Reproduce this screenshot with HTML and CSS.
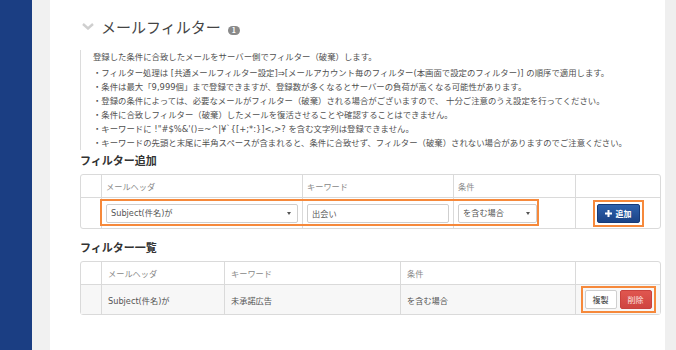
FILE: index.html
```html
<!DOCTYPE html>
<html lang="ja">
<head>
    <meta charset="UTF-8">
    <meta name="viewport" content="width=device-width, initial-scale=1.0">
    <title>メールフィルター</title>
    <link rel="stylesheet" href="styles.css">
</head>
<body>
    <div class="layout">
        <div class="sidebar"></div>
        <div class="main">
            <div class="panel">
                <h1 class="title">
                    <svg class="chevron" width="12" height="7" viewBox="0 0 12 7">
                        <polyline points="1,1 6,5.5 11,1" fill="none" stroke="#cfcfcf" stroke-width="2.4"/>
                    </svg>
                    メールフィルター
                    <span class="badge">1</span>
                </h1>

                <!-- Description -->
                <div class="note">
                    <p>登録した条件に合致したメールをサーバー側でフィルター（破棄）します。</p>
                    <ul>
                        <li>・フィルター処理は [共通メールフィルター設定]⇒[メールアカウント毎のフィルター(本画面で設定のフィルター)] の順序で適用します。</li>
                        <li>・条件は最大「9,999個」まで登録できますが、登録数が多くなるとサーバーの負荷が高くなる可能性があります。</li>
                        <li>・登録の条件によっては、必要なメールがフィルター（破棄）される場合がございますので、 十分ご注意のうえ設定を行ってください。</li>
                        <li>・条件に合致しフィルター（破棄）したメールを復活させることや確認することはできません。</li>
                        <li>・キーワードに !"#$%&amp;'()=~^|¥`{[+;*:}]&lt;,&gt;? を含む文字列は登録できません。</li>
                        <li>・キーワードの先頭と末尾に半角スペースが含まれると、条件に合致せず、フィルター（破棄）されない場合がありますのでご注意ください。</li>
                    </ul>
                </div>

                <!-- Add filter -->
                <h2 class="section-title">フィルター追加</h2>
                <div class="table-wrap">
                    <table class="grid grid-add">
                        <colgroup>
                            <col style="width: 20px">
                            <col style="width: 201px">
                            <col style="width: 151px">
                            <col style="width: 122px">
                            <col>
                        </colgroup>
                        <tr class="head">
                            <td></td>
                            <td>メールヘッダ</td>
                            <td>キーワード</td>
                            <td>条件</td>
                            <td></td>
                        </tr>
                        <tr class="body">
                            <td></td>
                            <td>
                                <div class="select select-wide">Subject(件名)が</div>
                            </td>
                            <td>
                                <input class="field" type="text" value="出会い">
                            </td>
                            <td>
                                <div class="select select-small">を含む場合</div>
                            </td>
                            <td class="actions">
                                <span class="mark">
                                    <button class="btn btn-primary">
                                        <svg width="7" height="7" viewBox="0 0 7 7">
                                            <path d="M2.5 0h2v2.5h2.5v2h-2.5v2.5h-2v-2.5h-2.5v-2h2.5z" fill="#fff"/>
                                        </svg>
                                        追加
                                    </button>
                                </span>
                            </td>
                        </tr>
                    </table>
                    <div class="highlight"></div>
                </div>

                <!-- Filter list -->
                <h2 class="section-title">フィルター一覧</h2>
                <table class="grid grid-list">
                    <colgroup>
                        <col style="width: 20px">
                        <col style="width: 123px">
                        <col style="width: 176px">
                        <col style="width: 175px">
                        <col>
                    </colgroup>
                    <tr class="head">
                        <td></td>
                        <td>メールヘッダ</td>
                        <td>キーワード</td>
                        <td>条件</td>
                        <td></td>
                    </tr>
                    <tr class="body striped">
                        <td></td>
                        <td>Subject(件名)が</td>
                        <td>未承諾広告</td>
                        <td>を含む場合</td>
                        <td class="actions">
                            <span class="mark">
                                <button class="btn btn-default">複製</button>
                                <button class="btn btn-danger">削除</button>
                            </span>
                        </td>
                    </tr>
                </table>
            </div>
        </div>
        <div class="scrollbar"></div>
    </div>
</body>
</html>
```

FILE: styles.css
```css
body {
    margin: 0;
    font-family: "DejaVu Sans", "Noto Sans CJK JP", sans-serif;
    color: #444;
}
.layout {
    display: flex;
    height: 350px;
    background-color: #f1f1f1; /* gray gutter */
}
.sidebar {
    width: 32px;
    background-color: #1b3e83;
}
.main {
    flex: 1;
    padding-left: 18px;
}
.scrollbar {
    width: 11px;
    background-color: #efefef;
}
.panel {
    height: 100%;
    box-sizing: border-box;
    background-color: #fff;
    padding: 14px 4px 0 30px;
}

/* Title */
.title {
    display: flex;
    align-items: center;
    margin: 0;
    height: 24px;
    font-size: 15px;
    font-weight: normal;
    font-family: "Noto Sans CJK JP", sans-serif;
    color: #444;
}
.chevron {
    margin: 0 7px 0 2px;
}
.badge {
    align-self: flex-end;
    margin: 0 0 3px 7px;
    height: 9px;
    padding: 0 4px;
    border-radius: 5px;
    background-color: #8a8a8a;
    color: #fff;
    font-size: 7px;
    line-height: 9px;
    font-weight: bold;
}

/* Description */
.note {
    margin-top: 12px;
    padding-left: 12px;
    border-left: 1px solid #dcdcdc;
    font-size: 8.4px;
    line-height: 14px;
    color: #505050;
}
.note p {
    margin: 0 0 2px;
}
.note ul {
    list-style: none;
    margin: 0;
    padding: 0;
}

/* Sections */
.section-title {
    margin: 2px 0 6px;
    font-size: 11px;
    line-height: 16px;
    font-family: "Noto Sans CJK JP", sans-serif;
    font-weight: bold;
    color: #333;
}
.table-wrap + .section-title,
.grid + .section-title {
    margin-top: 10px;
}
.table-wrap {
    position: relative;
}

/* Tables */
.grid {
    width: 581px;
    table-layout: fixed;
    border-collapse: separate;
    border-spacing: 0;
    border: 1px solid #dadada;
    border-radius: 3px;
    font-size: 8.2px;
    color: #555;
}
.grid td {
    border-left: 1px solid #dadada;
    padding: 0 4px;
    white-space: nowrap;
}
.grid td:first-child {
    border-left: none;
}
.grid .body td {
    border-top: 1px solid #dadada;
}
.grid .head td {
    height: 22px;
    color: #888;
}
.grid-add .body td {
    height: 30px;
}
.grid-list td {
    padding: 0 6px;
}
.grid-list .head td {
    height: 22px;
}
.grid-list .body td {
    height: 29px;
}
.striped td {
    background-color: #f7f7f7;
}
.grid td.actions {
    text-align: center;
    padding: 0;
}

/* Form controls */
.select,
.field {
    box-sizing: border-box;
    height: 19px;
    border: 1px solid #cfcfcf;
    border-radius: 2px;
    background-color: #fff;
    font-size: 8.2px;
    line-height: 17px;
    color: #555;
    padding: 0 4px;
}
.select {
    position: relative;
    font-family: "DejaVu Sans", "Noto Sans CJK JP", sans-serif;
}
.select::after {
    content: "";
    position: absolute;
    right: 6px;
    top: 7px;
    border-left: 2px solid transparent;
    border-right: 2px solid transparent;
    border-top: 3px solid #555;
}
.select-wide {
    width: 100%;
}
.select-small {
    width: 79px;
}
.field {
    width: 100%;
    font-family: "Noto Sans CJK JP", sans-serif;
    outline: none;
}

/* Orange marks */
.highlight {
    position: absolute;
    left: 20px;
    top: 25px;
    width: 439px;
    height: 27px;
    box-sizing: border-box;
    border: 2px solid #f6893b;
}
.mark {
    display: inline-flex;
    gap: 3px;
    padding: 2px;
    border: 2px solid #f6893b;
    vertical-align: middle;
}

/* Buttons */
.btn {
    display: inline-flex;
    align-items: center;
    justify-content: center;
    gap: 4px;
    height: 19px;
    margin: 0;
    padding: 0 6px;
    border-radius: 2px;
    font-family: "Noto Sans CJK JP", sans-serif;
    font-size: 8px;
}
.btn-primary {
    width: 43px;
    border: 1px solid #163a78;
    background: linear-gradient(#2e62ad, #1b4386);
    color: #fff;
    font-weight: bold;
}
.btn-default {
    width: 32px;
    border: 1px solid #cfcfcf;
    background-color: #fff;
    color: #333;
}
.btn-danger {
    width: 32px;
    border: 1px solid #c9413d;
    background: linear-gradient(#e0564f, #cf4541);
    color: #fde2e0;
}
```
